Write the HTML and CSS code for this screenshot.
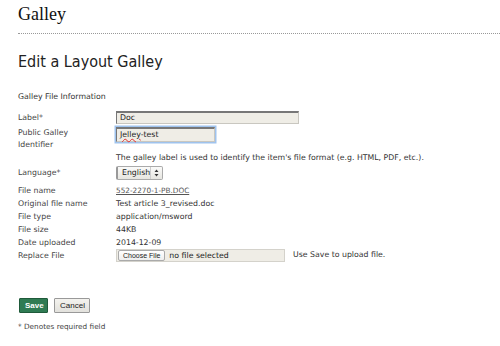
FILE: index.html
```html
<!DOCTYPE html>
<html lang="en">
<head>
    <meta charset="UTF-8" />
    <title>Edit a Layout Galley</title>
    <link rel="stylesheet" href="styles.css">
</head>
<body>
    <div class="page">
        <div class="site-title">Galley</div>
        <div class="rule"></div>
        <h2>Edit a Layout Galley</h2>

        <h3>Galley File Information</h3>

        <div class="field field-label-row">
            <div class="label">Label*</div>
            <div class="textbox wide">Doc</div>
        </div>
        <div class="field field-top">
            <div class="label two-line">Public Galley<br>Identifier</div>
            <div class="textbox short focused"><span class="misspelled">Jelley</span>-test</div>
        </div>
        <div class="help">The galley label is used to identify the item's file format (e.g. HTML, PDF, etc.).</div>
        <div class="field field-lang">
            <div class="label">Language*</div>
            <div class="select">
                <span class="select-text">English</span>
                <span class="select-arrows">
                    <svg width="5" height="8" viewBox="0 0 5 8"><path d="M0.5 3 L2.5 0.5 L4.5 3 Z M0.5 5 L2.5 7.5 L4.5 5 Z" fill="#333"/></svg>
                </span>
            </div>
        </div>

        <div class="info">
            <div class="info-row"><div class="label">File name</div><a class="file-link" href="#">552-2270-1-PB.DOC</a></div>
            <div class="info-row"><div class="label">Original file name</div><div>Test article 3_revised.doc</div></div>
            <div class="info-row"><div class="label">File type</div><div>application/msword</div></div>
            <div class="info-row"><div class="label">File size</div><div>44KB</div></div>
            <div class="info-row"><div class="label">Date uploaded</div><div>2014-12-09</div></div>
        </div>

        <div class="field field-file">
            <div class="label">Replace File</div>
            <div class="file-box">
                <span class="choose">Choose File</span>
                <span class="no-file">no file selected</span>
            </div>
            <div class="file-note">Use Save to upload file.</div>
        </div>

        <div class="buttons">
            <button class="btn btn-save">Save</button>
            <button class="btn btn-cancel">Cancel</button>
        </div>
        <div class="required-note">* Denotes required field</div>
    </div>
</body>
</html>
```

FILE: styles.css
```css
body {
    margin: 0;
    background: #fff;
    color: #333;
    font-family: "DejaVu Sans", sans-serif;
}
.page {
    padding-left: 18px;
}
.site-title {
    font-family: "Liberation Serif", serif;
    font-size: 18px;
    line-height: 24px;
    padding-top: 2px;
    color: #111;
}
.rule {
    margin-top: 7px;
    border-top: 1px dotted #999;
}
h2 {
    margin: 18px 0 0 0;
    font-family: "DejaVu Sans Condensed", "DejaVu Sans", sans-serif;
    font-size: 16px;
    line-height: 20px;
    font-weight: normal;
    color: #222;
}
h3 {
    margin: 19px 0 0 0;
    font-size: 7.8px;
    line-height: 12px;
    font-weight: normal;
    color: #333;
}
.field {
    display: flex;
    align-items: center;
    font-size: 7.8px;
}
.label {
    width: 98px;
    flex-shrink: 0;
    font-size: 7.8px;
    color: #444;
}
.field-label-row {
    margin-top: 7px;
    height: 14px;
}
.field-top {
    margin-top: 3px;
    align-items: flex-start;
    height: 17px;
}
.two-line {
    line-height: 12px;
    padding-top: 0px;
}
.textbox {
    box-sizing: border-box;
    background: #efede6;
    border: 1px solid #c9c7c0;
    border-top: 2px solid #777;
    border-left-color: #777;
    font-size: 7.8px;
    padding-left: 3px;
    color: #222;
}
.wide {
    width: 183px;
    height: 13px;
    line-height: 10px;
}
.short {
    width: 99px;
    height: 15px;
    line-height: 12px;
}
.focused {
    box-shadow: 0 0 0 1.5px #9fc3ee;
}
.misspelled {
    text-decoration: underline wavy #e03030;
    text-decoration-thickness: 1px;
}
.help {
    margin-top: 8px;
    padding-left: 98px;
    font-size: 7.8px;
    line-height: 12px;
}
.field-lang {
    margin-top: 1px;
    height: 15px;
}
.select {
    box-sizing: border-box;
    display: flex;
    align-items: center;
    justify-content: space-between;
    width: 47px;
    height: 14px;
    border: 1px solid #aaa;
    border-left: 2px solid #999;
    border-radius: 2px;
    background: linear-gradient(#fbfbfa, #e6e5e0);
    font-size: 7.8px;
}
.select-text {
    padding-left: 4px;
    color: #222;
}
.select-arrows {
    display: flex;
    align-items: center;
    height: 100%;
    padding: 0 3px;
    border-left: 1px solid #ccc;
}
.info {
    margin-top: 4px;
}
.info-row {
    display: flex;
    font-size: 7.8px;
    line-height: 13px;
}
.file-link {
    color: #555;
    font-size: 7.3px;
}
.field-file {
    margin-top: 0;
    height: 13px;
}
.file-box {
    box-sizing: border-box;
    display: flex;
    align-items: center;
    width: 169px;
    height: 13px;
    background: #efede6;
    border: 1px solid #d4d2cb;
}
.choose {
    box-sizing: border-box;
    height: 11px;
    line-height: 9px;
    padding: 0 4px;
    margin-left: 1px;
    background: linear-gradient(#fff, #eee);
    border: 1px solid #aaa;
    border-radius: 2px;
    font-family: "Liberation Sans", sans-serif;
    font-size: 7px;
    color: #222;
}
.no-file {
    margin-left: 4px;
    font-size: 7.8px;
    color: #222;
}
.file-note {
    margin-left: 8px;
    margin-top: -3px;
    font-size: 7.8px;
}
.buttons {
    display: flex;
    gap: 6px;
    margin-top: 36px;
    padding-left: 1px;
}
.btn {
    box-sizing: border-box;
    height: 15px;
    padding: 0 5px;
    font-family: "Liberation Sans", sans-serif;
    font-size: 8px;
    border-radius: 1px;
}
.btn-save {
    width: 29px;
    background: #2f7b53;
    border: 1px solid #1f5a3a;
    color: #fff;
    font-weight: bold;
}
.btn-cancel {
    width: 36px;
    background: linear-gradient(#f4f3ef, #e2e1dc);
    border: 1px solid #999;
    color: #222;
}
.required-note {
    margin-top: 9px;
    font-size: 7.3px;
    line-height: 10px;
    color: #444;
}
```
